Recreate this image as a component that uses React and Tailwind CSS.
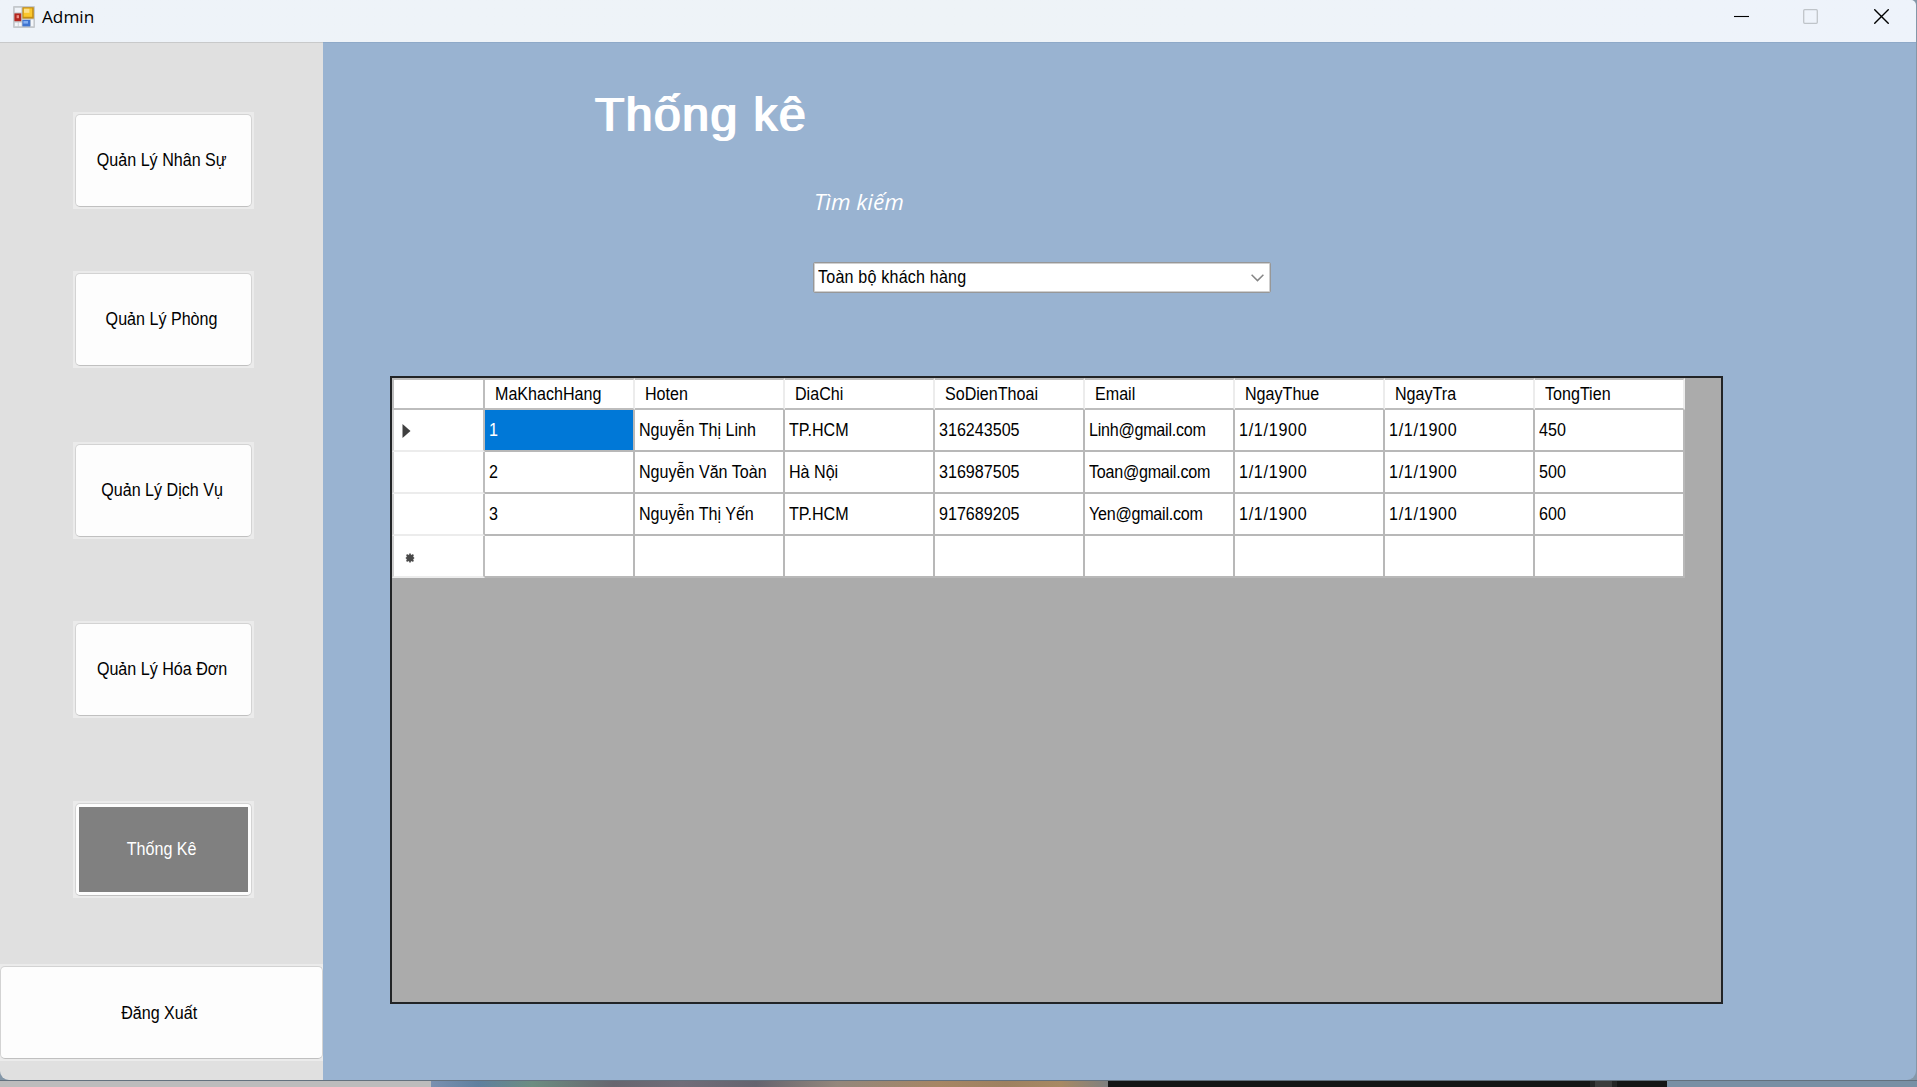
import React from "react";

const columns = ["MaKhachHang", "Hoten", "DiaChi", "SoDienThoai", "Email", "NgayThue", "NgayTra", "TongTien"];

const rows = [
  ["1", "Nguyễn Thị Linh", "TP.HCM", "316243505", "Linh@gmail.com", "1/1/1900", "1/1/1900", "450"],
  ["2", "Nguyễn Văn Toàn", "Hà Nội", "316987505", "Toan@gmail.com", "1/1/1900", "1/1/1900", "500"],
  ["3", "Nguyễn Thị Yến", "TP.HCM", "917689205", "Yen@gmail.com", "1/1/1900", "1/1/1900", "600"],
  ["", "", "", "", "", "", "", ""],
];

const columnTracking = ["", "", "", "", "tracking-[-0.28px]", "tracking-[0.82px]", "tracking-[0.82px]", ""];

function Label({ children, className = "origin-left" }) {
  return (
    <span className={`inline-block scale-x-[0.88] whitespace-pre text-[18.3px] leading-6 ${className}`}>{children}</span>
  );
}

function FormIcon() {
  return (
    <svg width="22" height="22" viewBox="0 0 22 22" className="block">
      <rect x="0" y="0" width="22" height="22" rx="1" fill="#c4c8cc" />
      <rect x="1.8" y="1.8" width="6.6" height="4.6" fill="#eff3f8" />
      <rect x="1.8" y="16.6" width="3" height="3.6" fill="#f4f6f9" />
      <rect x="5.6" y="16.6" width="3" height="3.6" fill="#f4f6f9" />
      <rect x="18" y="13.5" width="2.4" height="6.7" fill="#f4f6f9" />
      <rect x="9.4" y="1.2" width="11.4" height="11.4" fill="#c58e13" />
      <rect x="10.6" y="2.4" width="8.6" height="8.4" fill="#fbc72c" />
      <rect x="11" y="2.8" width="5.4" height="4" fill="#fde08a" />
      <rect x="1.4" y="7.4" width="6.8" height="7.8" fill="#b3261e" />
      <rect x="3.6" y="9.2" width="2.4" height="3" fill="#ee8f86" />
      <rect x="9.4" y="14" width="7.8" height="6.4" fill="#3f74cf" />
      <rect x="10.4" y="15" width="4.6" height="2.6" fill="#82aef2" />
    </svg>
  );
}

function TitleBar() {
  return (
    <header className="flex h-[42px] shrink-0 items-start justify-between bg-gradient-to-r from-[#eef3f9] via-[#eef3f7] to-[#eef3fb]">
      <div className="flex items-start pl-[13px] pt-1.5">
        <FormIcon />
        <span className="-mt-px ml-[7px] font-['Open_Sans',sans-serif] text-[17.2px] leading-6 text-black">Admin</span>
      </div>
      <div className="flex pr-[27px] pt-[9px] text-black">
        <svg width="15" height="15" viewBox="0 0 15 15" className="mr-[54px]">
          <path d="M0 7.5H15" stroke="currentColor" strokeWidth="1.1" />
        </svg>
        <svg width="15" height="15" viewBox="0 0 15 15" className="mr-14">
          <rect x="0.7" y="0.7" width="13.6" height="13.6" rx="1" fill="none" stroke="#bfc4c9" strokeWidth="1.3" />
        </svg>
        <svg width="15" height="15" viewBox="0 0 15 15">
          <path d="M0.3 0.3L14.7 14.7M14.7 0.3L0.3 14.7" stroke="currentColor" strokeWidth="1.4" />
        </svg>
      </div>
    </header>
  );
}

function NavButton({ label, active, className = "" }) {
  return (
    <div className={`h-[97px] w-[181px] bg-[#ebebeb] p-0.5 ${className}`}>
      <button className="flex h-full w-full rounded-[5px] border border-b-[1.5px] border-[#d3d3d3] border-b-[#c0c0c0] bg-[#fdfdfd] p-[3px]">
        <span className={`flex h-full w-full items-center justify-center ${active ? "bg-[#808080] text-white" : "text-black"}`}>
          <Label className="mb-0.5 mr-[3px] origin-center">{label}</Label>
        </span>
      </button>
    </div>
  );
}

function Sidebar() {
  return (
    <aside className="flex w-[323px] shrink-0 flex-col border-t border-[#c8c9ca] bg-[#e0e0e0]">
      <nav className="flex flex-col pl-[73px] pt-[69px]">
        <NavButton label="Quản Lý Nhân Sự" />
        <NavButton label="Quản Lý Phòng" className="mt-[62px]" />
        <NavButton label="Quản Lý Dịch Vụ" className="mt-[74px]" />
        <NavButton label="Quản Lý Hóa Đơn" className="mt-[82px]" />
        <NavButton label="Thống Kê" active className="mt-[83px]" />
      </nav>
      <div className="mt-[66px] h-[97px] bg-[#ebebeb] py-0.5">
        <button className="flex h-full w-full items-center justify-center rounded-[5px] border border-b-[1.5px] border-[#d3d3d3] border-b-[#c0c0c0] bg-[#fdfdfd]">
          <Label className="mr-1 origin-center">Đăng Xuất</Label>
        </button>
      </div>
    </aside>
  );
}

function SearchSelect() {
  return (
    <div className="ml-[490px] mt-[30px] flex h-[31px] w-[458px] items-center justify-between rounded-[2px] border border-[#979797] bg-white pl-1 pr-[6px] ring-1 ring-inset ring-[#cfcfcf]">
      <Label className="mb-0.5 origin-left tracking-[0.22px]">Toàn bộ khách hàng</Label>
      <svg width="13" height="8" viewBox="0 0 13 8">
        <path d="M0.6 0.8L6.5 6.6L12.4 0.8" fill="none" stroke="#858585" strokeWidth="1.5" />
      </svg>
    </div>
  );
}

function RowMarker({ index }) {
  if (index === 0) {
    return (
      <svg width="9" height="14" viewBox="0 0 9 14" className="ml-[8px] mt-px">
        <path d="M0.5 0L8.5 7L0.5 14Z" fill="#404040" />
      </svg>
    );
  }
  if (index === 3) {
    return (
      <svg width="10" height="10" viewBox="0 0 10 10" className="ml-[11px] mt-1">
        <circle cx="5" cy="5" r="3.6" fill="#555555" />
        <path d="M5 0.5V9.5M0.8 5H9.2M1.6 1.6L8.4 8.4M8.4 1.6L1.6 8.4" stroke="#484848" strokeWidth="1.6" />
      </svg>
    );
  }
  return null;
}

function DataGrid() {
  return (
    <div className="ml-[67px] h-[628px] w-[1333px] border-2 border-[#222426] bg-[#ababab]">
      <div className="grid w-[1293px] grid-cols-[93px_repeat(8,150px)]">
        <div className="h-8 border-2 border-[#bdbdbd] bg-white" />
        {columns.map((name) => (
          <div key={name} className="flex h-8 items-center border-y-2 border-r-2 border-y-[#bdbdbd] border-r-[#ececec] bg-white pl-2.5">
            <Label>{name}</Label>
          </div>
        ))}
        {rows.map((cells, r) => (
          <React.Fragment key={r}>
            <div className="flex h-[42px] items-center border-b-2 border-l-2 border-r-2 border-b-[#ececec] border-l-[#cfcfcf] border-r-[#bdbdbd] bg-white">
              <RowMarker index={r} />
            </div>
            {cells.map((cell, c) => (
              <div
                key={c}
                className={`flex h-[42px] items-center border-b-2 border-r-2 border-[#b8b8b8] pl-1 ${
                  r === 0 && c === 0 ? "bg-[#0078d7] text-white" : "bg-white"
                }`}
              >
                <Label className={`origin-left ${columnTracking[c]}`}>{cell}</Label>
              </div>
            ))}
          </React.Fragment>
        ))}
      </div>
    </div>
  );
}

function Desktop() {
  return (
    <div className="flex h-[7px] w-full border-t border-black/25">
      <div className="w-[431px] bg-[#bcbcbc]" />
      <div className="w-[677px] bg-[linear-gradient(90deg,#7a90b0_0%,#5f809f_7%,#6c8d81_15%,#67666f_27%,#706d79_37%,#65646f_48%,#93877c_60%,#a68664_75%,#9e8160_85%,#a78963_93%,#7f8080_100%)]" />
      <div className="flex w-[559px] justify-end bg-[#151616] pr-[50px]">
        <div className="h-full w-[27px] border-x-[5px] border-[#242525] bg-[#3c3d3d]" />
      </div>
      <div className="flex-1 bg-[#7890a5]" />
    </div>
  );
}

export default function App() {
  return (
    <div className="flex h-[1087px] w-[1917px] flex-col overflow-hidden bg-[#8497a8] font-['Liberation_Sans',Arial,sans-serif] text-black">
      <div className="flex h-[1080px] w-[1916px] flex-col overflow-hidden rounded-b-[9px] rounded-tr-[5px]">
        <TitleBar />
        <div className="flex min-h-0 flex-1">
          <Sidebar />
          <main className="flex flex-1 flex-col border-t border-[#8ea9c8] bg-[#99b3d1]">
            <h1 className="ml-[271px] mt-[42px] whitespace-nowrap text-[48px] leading-[60px] tracking-[1.5px] text-white [text-shadow:1px_0_0_white,2px_0_0_white]">
              Thống kê
            </h1>
            <p className="ml-[491px] mt-[27px] whitespace-nowrap font-['Open_Sans',sans-serif] text-[22.5px] italic leading-[60px] text-white">
              Tìm kiếm
            </p>
            <SearchSelect />
            <div className="mt-[83px]">
              <DataGrid />
            </div>
          </main>
        </div>
      </div>
      <Desktop />
    </div>
  );
}
